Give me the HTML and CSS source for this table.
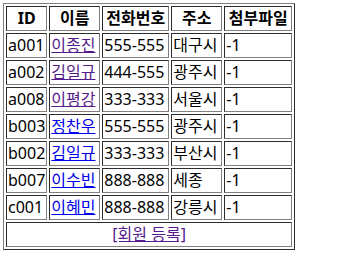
FILE: index.html
```html
<!DOCTYPE html>
<html lang="ko">
<head>
    <meta charset="UTF-8" />
    <title>회원 목록</title>
    <link rel="stylesheet" href="styles.css">
</head>
<body>

<table class="member-list">
    <tr>
        <th class="c-id">ID</th><th class="c-name">이름</th><th class="c-tel">전화번호</th><th class="c-addr">주소</th><th class="c-file">첨부파일</th>
    </tr>
    <tr>
        <td>a001</td><td><a class="visited" href="#">이종진</a></td><td>555-555</td><td>대구시</td><td>-1</td>
    </tr>
    <tr>
        <td>a002</td><td><a class="visited" href="#">김일규</a></td><td>444-555</td><td>광주시</td><td>-1</td>
    </tr>
    <tr>
        <td>a008</td><td><a class="visited" href="#">이평강</a></td><td>333-333</td><td>서울시</td><td>-1</td>
    </tr>
    <tr>
        <td>b003</td><td><a href="#">정찬우</a></td><td>555-555</td><td>광주시</td><td>-1</td>
    </tr>
    <tr>
        <td>b002</td><td><a href="#">김일규</a></td><td>333-333</td><td>부산시</td><td>-1</td>
    </tr>
    <tr>
        <td>b007</td><td><a href="#">이수빈</a></td><td>888-888</td><td>세종</td><td>-1</td>
    </tr>
    <tr>
        <td>c001</td><td><a href="#">이혜민</a></td><td>888-888</td><td>강릉시</td><td>-1</td>
    </tr>
    <tr>
        <td colspan="5" class="bottom"><a class="visited" href="#">[회원 등록]</a></td>
    </tr>
</table>

</body>
</html>
```

FILE: styles.css
```css
body {
    margin: 3px;
    font-family: "Noto Sans", "Noto Sans CJK KR", sans-serif;
    font-size: 16px;
    color: #000;
}

.member-list {
    border: 1px outset #808080;
    border-spacing: 2px;
}

.member-list th,
.member-list td {
    box-sizing: border-box;
    height: 25px;
    border: 1px inset #808080;
    padding: 1px;
    line-height: 21px;
    white-space: nowrap;
}

.member-list th {
    font-weight: bold;
    text-align: center;
}

.member-list td {
    text-align: left;
}

.member-list td.bottom {
    text-align: center;
}

/* column widths, border included */
.c-id { width: 39px; }
.c-name { width: 51px; }
.c-tel { width: 67px; }
.c-addr { width: 51px; }
.c-file { width: 68px; }

a {
    color: #0000ee;
}

a.visited {
    color: #551a8b;
}
```
